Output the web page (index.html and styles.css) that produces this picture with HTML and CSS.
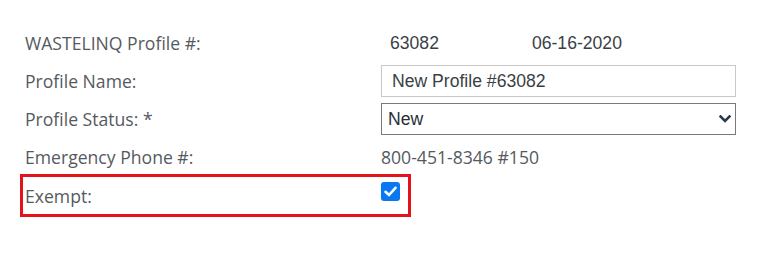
FILE: index.html
```html
<!DOCTYPE html>
<html>
<head>
<meta charset="utf-8">
<link rel="stylesheet" href="styles.css">
</head>
<body>
<div class="form">
  <div class="row">
    <div class="label">WASTELINQ Profile #:</div>
    <div class="value ids"><span class="num">63082</span><span class="date">06-16-2020</span></div>
  </div>
  <div class="row">
    <div class="label">Profile Name:</div>
    <div class="value"><div class="input">New Profile #63082</div></div>
  </div>
  <div class="row">
    <div class="label">Profile Status: *</div>
    <div class="value"><div class="select"><span>New</span>
      <svg class="chev" width="12" height="8" viewBox="0 0 12 8"><polyline points="1.5,1.5 6,6 10.5,1.5" fill="none" stroke="#2b3a4a" stroke-width="2.6" stroke-linecap="square"/></svg>
    </div></div>
  </div>
  <div class="row">
    <div class="label">Emergency Phone #:</div>
    <div class="value phone">800-451-8346 #150</div>
  </div>
  <div class="row exempt">
    <div class="label">Exempt:</div>
    <div class="value check-cell"><span class="check">
      <svg width="19" height="19" viewBox="0 0 19 19"><polyline points="4.5,9.8 8,13 14.5,5.8" fill="none" stroke="#fff" stroke-width="2.6" stroke-linecap="round" stroke-linejoin="round"/></svg>
    </span></div>
  </div>
</div>
</body>
</html>
```

FILE: styles.css
```css
html, body {
  margin: 0;
  padding: 0;
  background: #ffffff;
}
.form {
  padding: 24px 0 0 25px;
  font-family: "Open Sans", sans-serif;
  font-size: 17.6px;
  color: #555a60;
}
.row {
  display: grid;
  grid-template-columns: 356px 355px;
  height: 38px;
  align-items: center;
}
.label {
  white-space: nowrap;
}
.ids {
  font-family: "Liberation Sans", Arial, sans-serif;
  color: #3a3f45;
  display: flex;
  padding-left: 9px;
}
.ids .date {
  margin-left: 93px;
}
.input {
  height: 32px;
  box-sizing: border-box;
  border: 1px solid #c9c9c9;
  padding: 0 10px;
  display: flex;
  align-items: center;
  font-family: "Liberation Sans", Arial, sans-serif;
  color: #3a3f45;
}
.select {
  height: 32px;
  box-sizing: border-box;
  border: 1px solid #7a7a7a;
  padding: 0 4px 0 6px;
  display: flex;
  align-items: center;
  justify-content: space-between;
  font-family: "Liberation Sans", Arial, sans-serif;
  color: #2a2f35;
}
.chev {
  margin-right: 0;
}
.phone {
  color: #555a60;
}
.exempt {
  width: fit-content;
  grid-template-columns: 356px 19px;
  height: 37px;
  margin-left: -5px;
  margin-top: -2px;
  padding: 0 8px 0 2px;
  border: 3px solid #e3121b;
}
.check-cell {
  align-self: start;
  padding-top: 5px;
}
.check {
  display: block;
  width: 19px;
  height: 19px;
  border-radius: 3px;
  background: #0a78f0;
}
.check svg {
  display: block;
}
```
